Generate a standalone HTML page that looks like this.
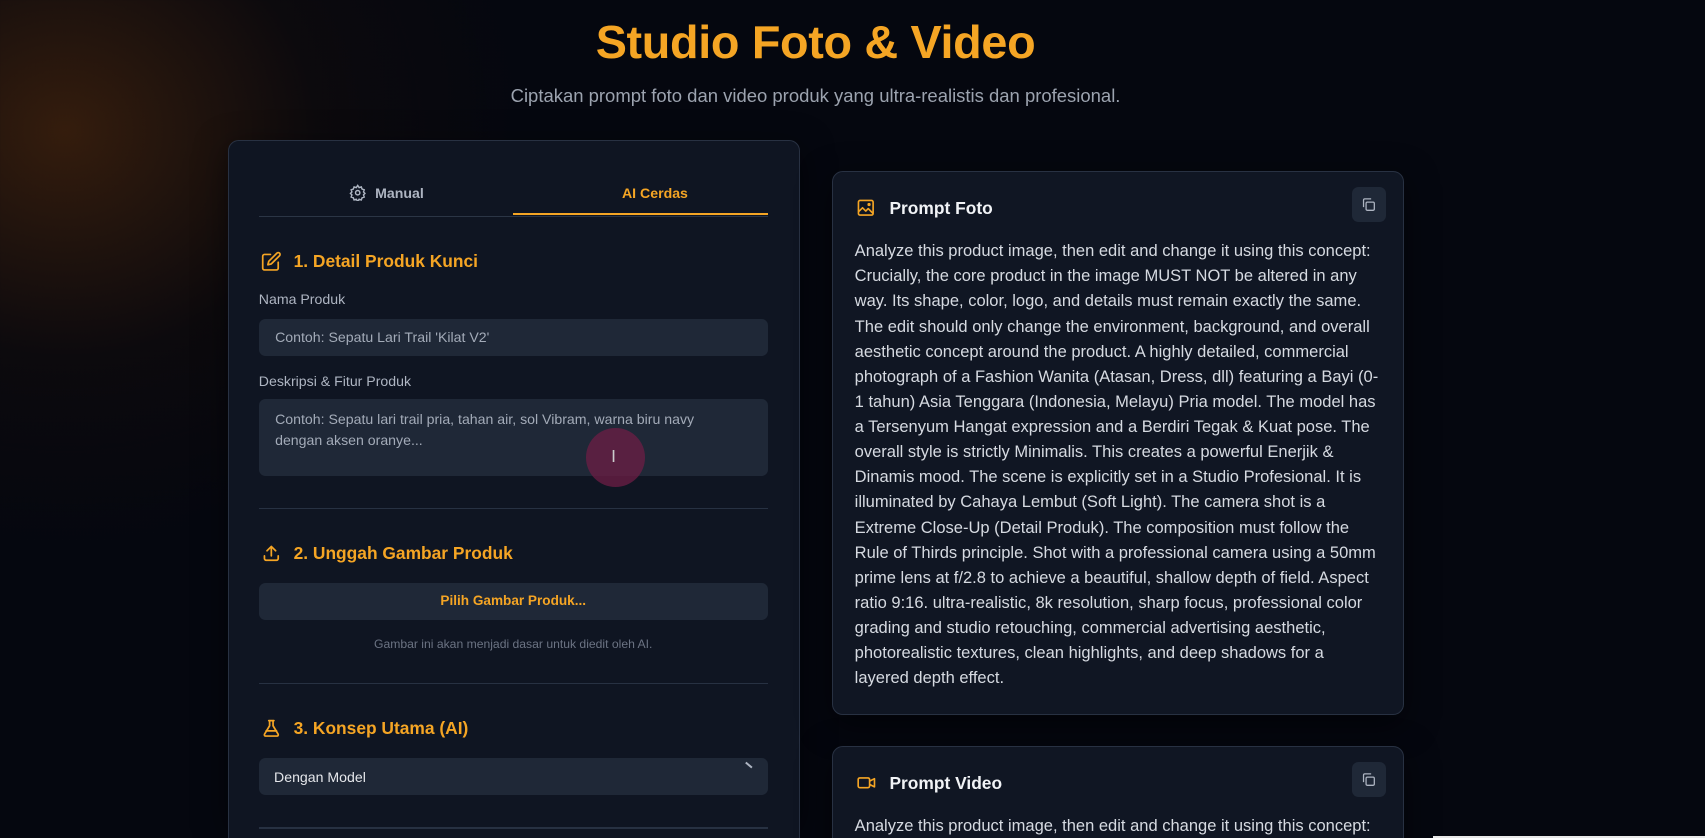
<!DOCTYPE html>
<html><head><meta charset="utf-8"><style>
html,body{margin:0;padding:0;width:1705px;height:838px;overflow:hidden;background:#05070f;}
#w{zoom:1.08737;width:1568px;height:771px;position:relative;overflow:hidden;font-family:"Liberation Sans",sans-serif;
background:radial-gradient(ellipse 420px 380px at 60px 120px,rgba(110,55,10,.45),rgba(40,20,5,.2) 55%,rgba(5,7,15,0) 100%),#05070f;}
.a{position:absolute;white-space:nowrap;}
h1{position:absolute;margin:0;left:0;width:1500px;text-align:center;top:14px;font-size:43px;font-weight:bold;color:#f5a524;letter-spacing:-0.3px;}
.sub{left:0;width:1500px;text-align:center;top:78px;font-size:17px;color:#9ca3af;}
.panel{position:absolute;left:210px;top:129px;width:524px;height:630px;background:#0f1522;border:1px solid #283142;border-radius:10px;box-shadow:0 8px 30px rgba(0,0,0,.5);}
.card{position:absolute;left:765px;width:524px;background:#101623;border:1px solid #283142;border-radius:10px;box-shadow:0 8px 30px rgba(0,0,0,.5);}
.h{font-size:16px;font-weight:bold;color:#f5a524;}
.lbl{font-size:13px;color:#aeb5c2;}
.inp{position:absolute;left:238px;width:468px;background:#1f2837;border-radius:6px;}
.ph{font-size:13px;color:#a3abb8;}
.div{position:absolute;left:238px;width:468px;height:1px;background:#273142;}
.body{position:absolute;left:786px;font-size:15.2px;line-height:23.1px;color:#d6dae1;white-space:nowrap;}
.copy{position:absolute;width:32px;height:32px;border-radius:6px;background:#1f2837;}
</style></head><body><div id="w">
<h1>Studio Foto &amp; Video</h1>
<div class="a sub">Ciptakan prompt foto dan video produk yang ultra-realistis dan profesional.</div>

<div class="panel"></div>
<div class="a" style="left:210px;top:740px;width:526px;height:31px;background:#0f1522;border-left:1px solid #283142;border-right:1px solid #283142;box-sizing:border-box"></div>
<div class="a" style="left:238px;top:199px;width:468px;height:1px;background:#2b3545"></div>
<div class="a" style="left:472px;top:196px;width:234px;height:2px;background:#f5a524"></div>
<svg class="a" style="left:321px;top:169px" width="16" height="16" viewBox="0 0 24 24" fill="none" stroke="#aeb5c2" stroke-width="2"><circle cx="12" cy="12" r="3"/><path d="M12 2l2 3 3-1 1 3 3 1-1 3 2 2-2 2 1 3-3 1-1 3-3-1-2 3-2-3-3 1-1-3-3-1 1-3-2-2 2-2-1-3 3-1 1-3 3 1z"/></svg>
<div class="a" style="left:345px;top:170px;font-size:13px;font-weight:bold;color:#aeb5c2">Manual</div>
<div class="a" style="left:572px;top:170px;font-size:13px;font-weight:bold;color:#f5a524">AI Cerdas</div>

<svg class="a" style="left:240px;top:231px" width="19" height="19" viewBox="0 0 24 24" fill="none" stroke="#f5a524" stroke-width="2" stroke-linecap="round" stroke-linejoin="round"><path d="M11 4H4a2 2 0 0 0-2 2v14a2 2 0 0 0 2 2h14a2 2 0 0 0 2-2v-7"/><path d="M18.5 2.5a2.1 2.1 0 0 1 3 3L12 15l-4 1 1-4z"/></svg>
<div class="a h" style="left:270px;top:231px">1. Detail Produk Kunci</div>
<div class="a lbl" style="left:238px;top:268px">Nama Produk</div>
<div class="inp" style="top:293px;height:34px"></div>
<div class="a ph" style="left:253px;top:303px">Contoh: Sepatu Lari Trail 'Kilat V2'</div>
<div class="a lbl" style="left:238px;top:343px">Deskripsi &amp; Fitur Produk</div>
<div class="inp" style="top:367px;height:71px"></div>
<div class="a ph" style="left:253px;top:376px;line-height:19px">Contoh: Sepatu lari trail pria, tahan air, sol Vibram, warna biru navy<br>dengan aksen oranye...</div>
<div class="a" style="left:539px;top:394px;width:54px;height:54px;border-radius:50%;background:rgba(110,30,70,.75)"></div>
<div class="a" style="left:562px;top:410px;font-size:16px;color:#ccc">I</div>
<div class="div" style="top:467px"></div>

<svg class="a" style="left:240px;top:499px" width="19" height="19" viewBox="0 0 24 24" fill="none" stroke="#f5a524" stroke-width="2" stroke-linecap="round" stroke-linejoin="round"><path d="M4 15v3a2 2 0 0 0 2 2h12a2 2 0 0 0 2-2v-3"/><path d="M12 15V4M7 9l5-5 5 5"/></svg>
<div class="a h" style="left:270px;top:499px">2. Unggah Gambar Produk</div>
<div class="inp" style="top:536px;height:34px"></div>
<div class="a" style="left:238px;width:468px;text-align:center;top:545px;font-size:12.5px;font-weight:bold;color:#f5a524">Pilih Gambar Produk...</div>
<div class="a" style="left:238px;width:468px;text-align:center;top:586px;font-size:11.2px;color:#6b7383">Gambar ini akan menjadi dasar untuk diedit oleh AI.</div>
<div class="div" style="top:628px"></div>

<svg class="a" style="left:240px;top:660px" width="19" height="19" viewBox="0 0 24 24" fill="none" stroke="#f5a524" stroke-width="2" stroke-linecap="round" stroke-linejoin="round"><path d="M9 3h6M10 3v6L4 19a1.5 1.5 0 0 0 1.3 2h13.4a1.5 1.5 0 0 0 1.3-2L14 9V3"/><path d="M6 15h12"/></svg>
<div class="a h" style="left:270px;top:660px">3. Konsep Utama (AI)</div>
<div class="inp" style="top:697px;height:34px"></div>
<div class="a" style="left:252px;top:707px;font-size:13px;color:#e5e7eb">Dengan Model</div>
<div class="a" style="left:685px;top:703px;width:7px;height:1.5px;background:#aeb5c2;transform:rotate(40deg)"></div>
<div class="div" style="top:761px"></div>

<div class="card" style="top:157px;height:499px"></div>
<svg class="a" style="left:787px;top:182px" width="18" height="18" viewBox="0 0 24 24" fill="none" stroke="#f5a524" stroke-width="2" stroke-linejoin="round"><rect x="3" y="3" width="18" height="18" rx="2"/><path d="M3 17l5-5 4 4 3-3 6 6"/><circle cx="16" cy="8" r="1"/></svg>
<div class="a" style="left:818px;top:182px;font-size:16px;font-weight:bold;color:#f1f3f6">Prompt Foto</div>
<div class="copy" style="left:1243px;top:172px"></div>
<svg class="a" style="left:1252px;top:181px" width="14" height="14" viewBox="0 0 24 24" fill="none" stroke="#aeb5c2" stroke-width="2"><rect x="8" y="8" width="13" height="13" rx="2"/><path d="M4 16V5a2 2 0 0 1 2-2h10"/></svg>
<div class="body" style="top:219px">Analyze this product image, then edit and change it using this concept:<br>Crucially, the core product in the image MUST NOT be altered in any<br>way. Its shape, color, logo, and details must remain exactly the same.<br>The edit should only change the environment, background, and overall<br>aesthetic concept around the product. A highly detailed, commercial<br>photograph of a Fashion Wanita (Atasan, Dress, dll) featuring a Bayi (0-<br>1 tahun) Asia Tenggara (Indonesia, Melayu) Pria model. The model has<br>a Tersenyum Hangat expression and a Berdiri Tegak &amp; Kuat pose. The<br>overall style is strictly Minimalis. This creates a powerful Enerjik &amp;<br>Dinamis mood. The scene is explicitly set in a Studio Profesional. It is<br>illuminated by Cahaya Lembut (Soft Light). The camera shot is a<br>Extreme Close-Up (Detail Produk). The composition must follow the<br>Rule of Thirds principle. Shot with a professional camera using a 50mm<br>prime lens at f/2.8 to achieve a beautiful, shallow depth of field. Aspect<br>ratio 9:16. ultra-realistic, 8k resolution, sharp focus, professional color<br>grading and studio retouching, commercial advertising aesthetic,<br>photorealistic textures, clean highlights, and deep shadows for a<br>layered depth effect.</div>

<div class="card" style="top:686px;height:100px"></div>
<svg class="a" style="left:787px;top:711px" width="19" height="18" viewBox="0 0 24 24" fill="none" stroke="#f5a524" stroke-width="2" stroke-linejoin="round"><rect x="2" y="6" width="14" height="12" rx="2"/><path d="M16 10l6-3v10l-6-3"/></svg>
<div class="a" style="left:818px;top:711px;font-size:16px;font-weight:bold;color:#f1f3f6">Prompt Video</div>
<div class="copy" style="left:1243px;top:701px"></div>
<svg class="a" style="left:1252px;top:710px" width="14" height="14" viewBox="0 0 24 24" fill="none" stroke="#aeb5c2" stroke-width="2"><rect x="8" y="8" width="13" height="13" rx="2"/><path d="M4 16V5a2 2 0 0 1 2-2h10"/></svg>
<div class="body" style="top:748px">Analyze this product image, then edit and change it using this concept:</div>
<div class="a" style="left:1318px;top:769px;width:250px;height:2px;background:#e8e8e8"></div>
</div></body></html>
